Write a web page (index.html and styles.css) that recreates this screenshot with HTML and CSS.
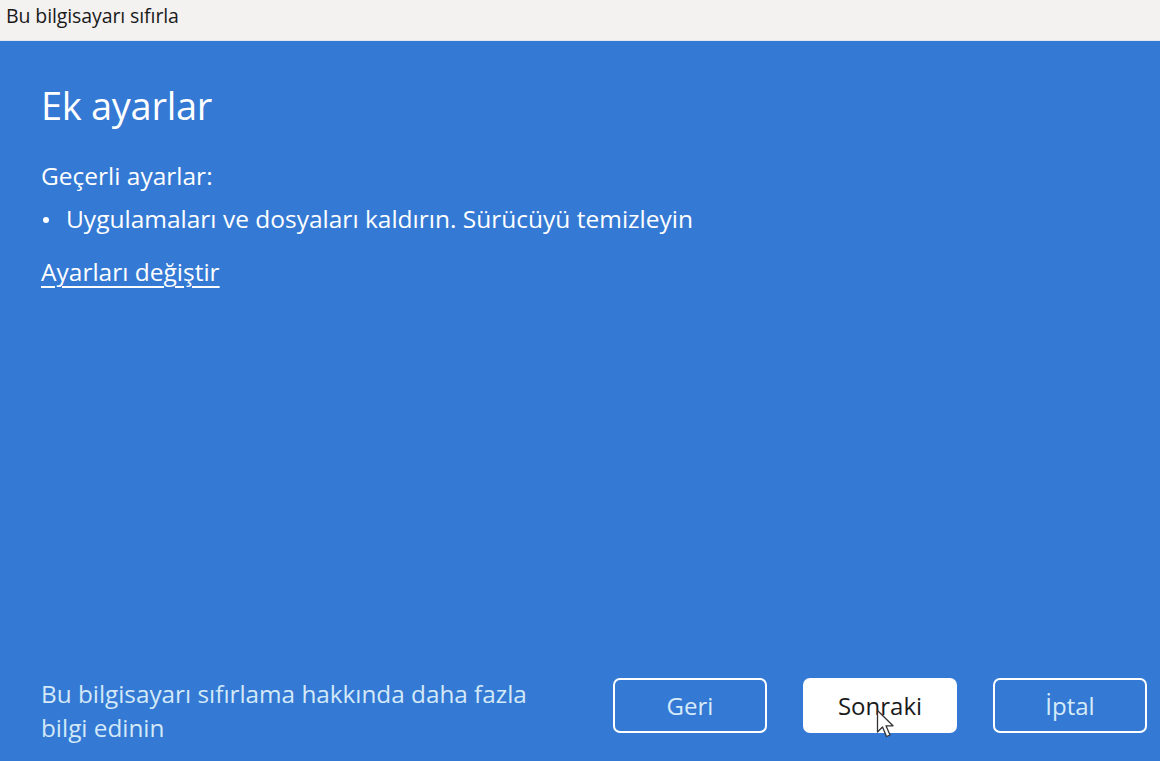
FILE: index.html
```html
<!DOCTYPE html>
<html lang="tr">
<head>
  <meta charset="UTF-8">
  <title>Bu bilgisayarı sıfırla</title>
  <link rel="stylesheet" href="styles.css">
</head>
<body>
  <div class="titlebar">Bu bilgisayarı sıfırla</div>
  <div class="panel">
    <div class="content">
      <h1 class="title">Ek ayarlar</h1>
      <div class="label">Geçerli ayarlar:</div>
      <ul class="settings">
        <li>Uygulamaları ve dosyaları kaldırın. Sürücüyü temizleyin</li>
      </ul>
      <a href="#" class="link">Ayarları değiştir</a>
    </div>
    <div class="footer">
      <a href="#" class="more">Bu bilgisayarı sıfırlama hakkında daha fazla<br>bilgi edinin</a>
      <div class="actions">
        <button class="btn">Geri</button>
        <button class="btn primary">Sonraki
          <svg class="cursor" width="22" height="30" viewBox="0 0 22 30">
            <path d="M1.5 1.5 L1.5 23 L6.5 18 L10.5 27.5 L14 26 L10 16.8 L17 16.8 Z" fill="#fff" stroke="#333" stroke-width="1.3" stroke-linejoin="round"/>
          </svg>
        </button>
        <button class="btn">İptal</button>
      </div>
    </div>
  </div>
</body>
</html>
```

FILE: styles.css
```css
html, body {
  margin: 0;
  padding: 0;
  height: 100%;
}
body {
  font-family: 'Open Sans', 'Noto Sans', Arial, sans-serif;
  background: #3479d4;
  display: flex;
  flex-direction: column;
  overflow: hidden;
}
.titlebar {
  height: 41px;
  background: #f4f2f1;
  color: #1a1a1a;
  font-size: 19.5px;
  line-height: 32px;
  padding-left: 6px;
  box-sizing: border-box;
  border-bottom: 1px solid #dfe6ee;
  letter-spacing: -0.1px;
}
.panel {
  flex: 1;
  display: flex;
  flex-direction: column;
  justify-content: space-between;
  padding: 0 13px 0 41px;
}
.content {
  color: #fff;
}
.title {
  font-weight: normal;
  font-size: 38px;
  margin: 39px 0 0;
  line-height: 50px;
  letter-spacing: -0.3px;
}
.label {
  font-size: 24.5px;
  margin-top: 29px;
  line-height: 34px;
}
.settings {
  margin: 9px 0 0;
  padding: 0;
  list-style: none;
}
.settings li {
  display: flex;
  align-items: center;
  font-size: 24.5px;
  line-height: 34px;
}
.settings li::before {
  content: "";
  width: 6px;
  height: 6px;
  border-radius: 50%;
  background: #fff;
  margin: 2px 17px 0 2px;
}
.link {
  display: inline-block;
  margin-top: 19px;
  color: #fff;
  font-size: 24.5px;
  line-height: 34px;
  text-decoration: underline;
  text-underline-offset: 5px;
  text-decoration-thickness: 1.5px;
}
.footer {
  display: flex;
  justify-content: space-between;
  align-items: flex-end;
  padding-bottom: 16px;
}
.more {
  color: #d3e9f8;
  font-size: 24.3px;
  line-height: 34px;
  text-decoration: none;
}
.actions {
  display: flex;
  gap: 36px;
  padding-bottom: 12px;
}
.btn {
  width: 154px;
  height: 55px;
  border: 2px solid #fff;
  border-radius: 7px;
  background: transparent;
  color: #d6ebf9;
  font-family: inherit;
  font-size: 24px;
  position: relative;
}
.btn.primary {
  background: #fff;
  color: #1a1a1a;
}
.cursor {
  position: absolute;
  left: 71px;
  top: 29px;
}
```
